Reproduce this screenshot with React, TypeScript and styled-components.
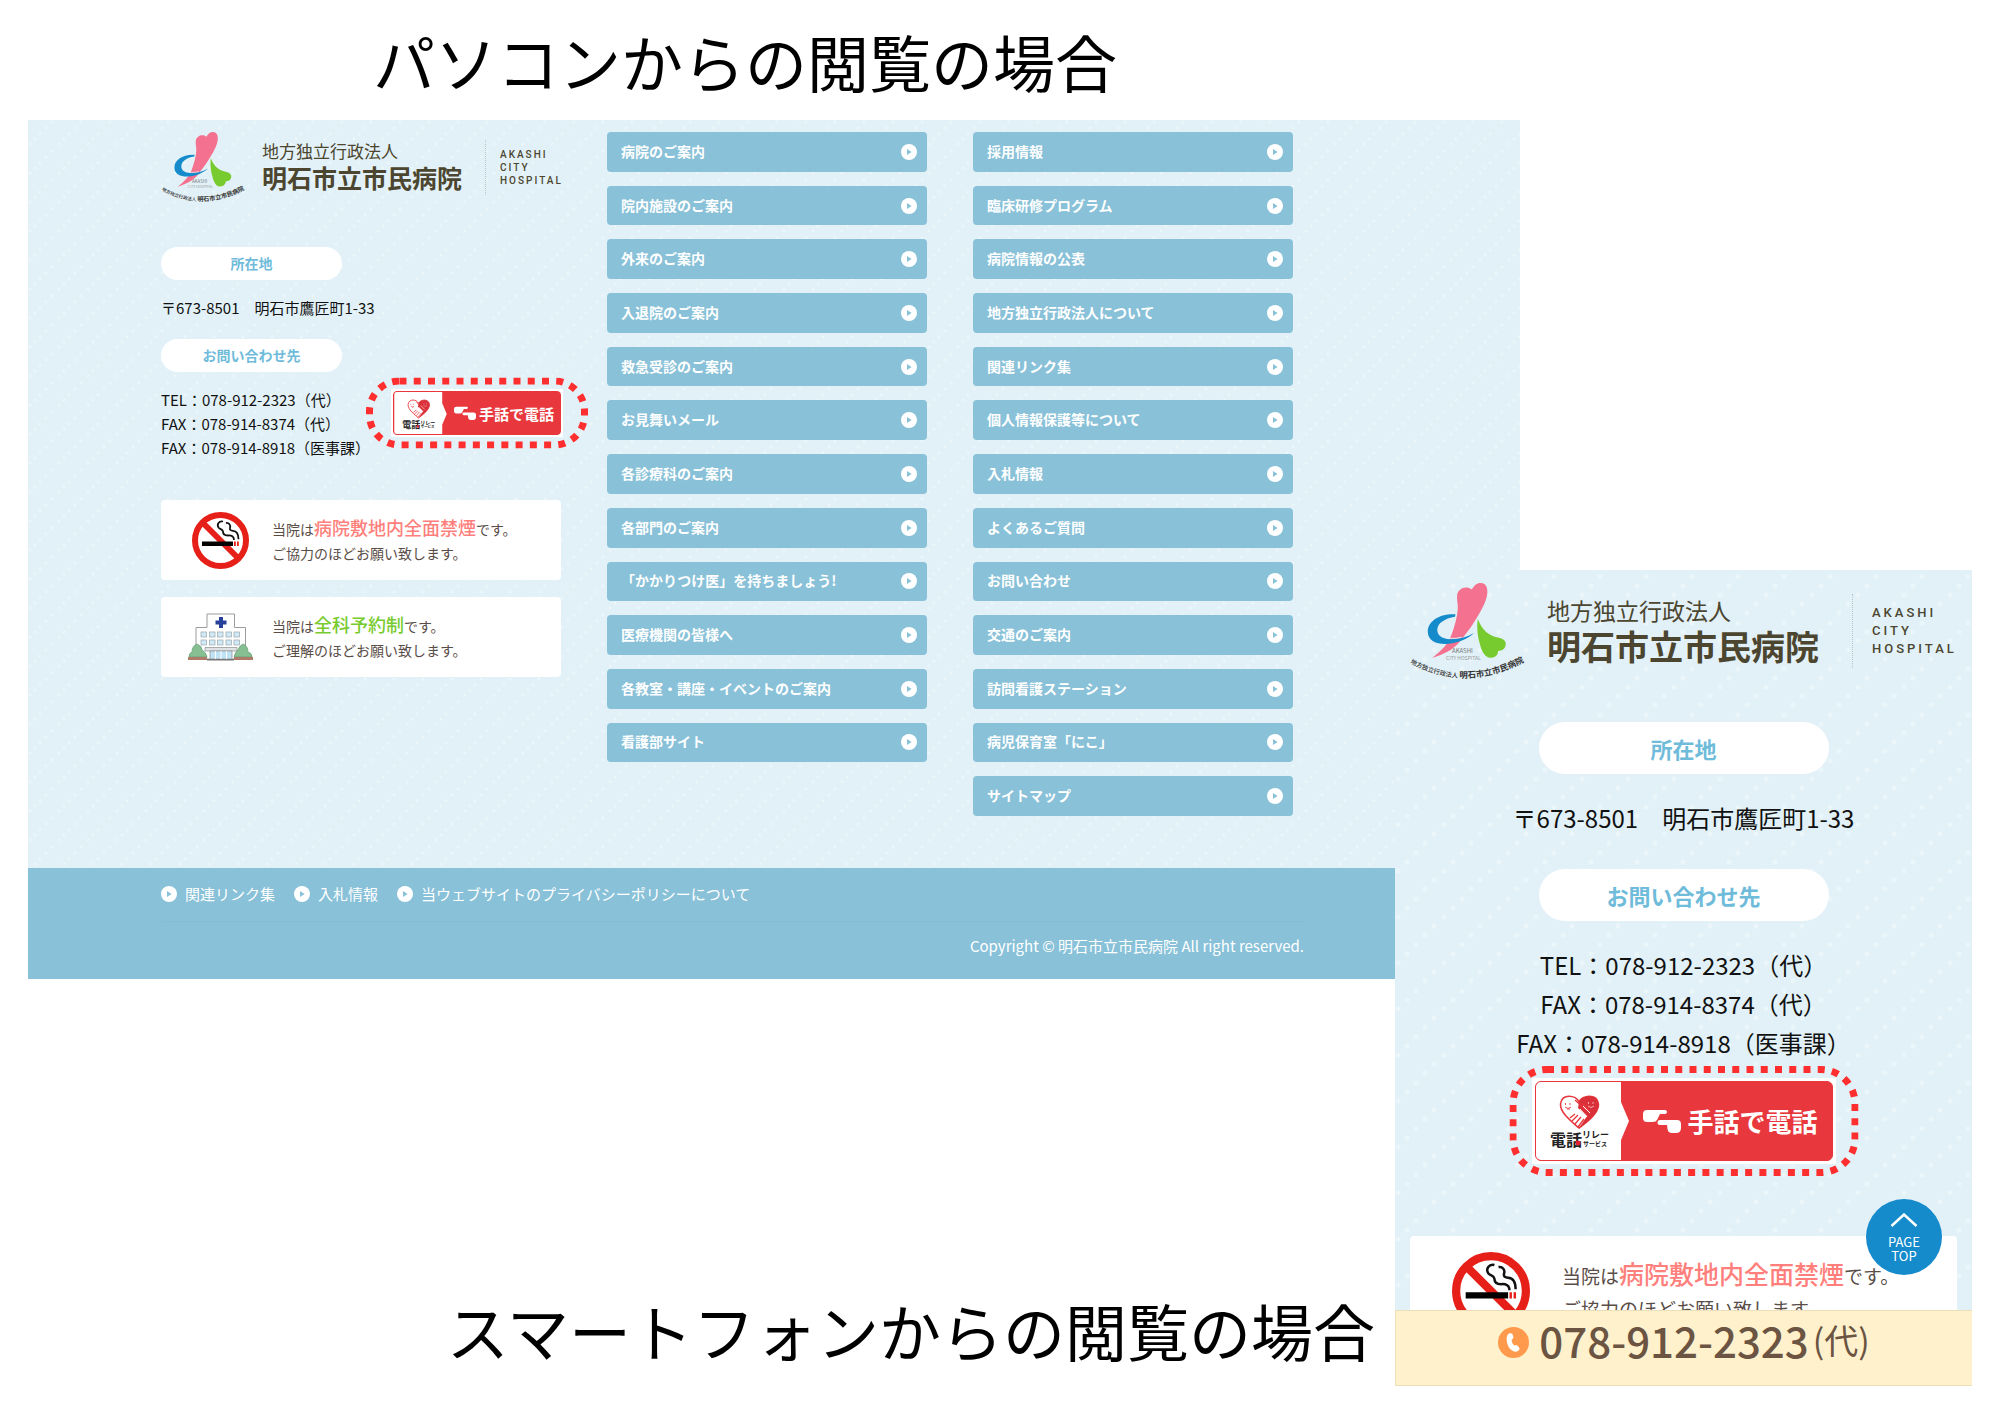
import React from 'react';
import styled, { createGlobalStyle, css } from 'styled-components';

const colors = {
  panel: '#e2f1f7',
  dot: '#eaf6fa',
  bar: '#88c1d8',
  heading: '#6fbbda',
  brown: '#4c4630',
  note: '#594d47',
  alert: '#ff2f2f',
  relay: '#e8383d',
};

const GlobalStyle = createGlobalStyle`
  *, *::before, *::after { box-sizing: border-box; }
  body {
    margin: 0;
    background: #fff;
    color: #111;
    font-family: 'Noto Sans CJK JP', 'Noto Sans', sans-serif;
  }
  h1, h2, h3, p, ul, address { margin: 0; padding: 0; font-weight: inherit; font-style: normal; }
  ul { list-style: none; }
  a { color: inherit; text-decoration: none; }
  svg { display: block; flex: none; }
`;

const smallDots = css`
  background-color: ${colors.panel};
  background-image: radial-gradient(circle at 24px 2px, ${colors.dot} 1px, transparent 2px),
    radial-gradient(circle at 18px 8px, ${colors.dot} 1px, transparent 2px),
    radial-gradient(circle at 12px 14px, ${colors.dot} 1px, transparent 2px),
    radial-gradient(circle at 7px 19px, ${colors.dot} 1px, transparent 2px),
    radial-gradient(circle at 2px 24px, ${colors.dot} 1px, transparent 2px);
  background-size: 29px 29px;
`;

const largeDots = css`
  background-color: ${colors.panel};
  background-image: radial-gradient(circle at 30px 43px, ${colors.dot} 2px, transparent 3px),
    radial-gradient(circle at 21px 7px, ${colors.dot} 2px, transparent 3px),
    radial-gradient(circle at 12px 16px, ${colors.dot} 2px, transparent 3px),
    radial-gradient(circle at 3px 25px, ${colors.dot} 2px, transparent 3px),
    radial-gradient(circle at 39px 34px, ${colors.dot} 2px, transparent 3px);
  background-size: 46px 46px;
`;

/* ---------- board ---------- */

const Board = styled.main`
  display: grid;
  grid-template-columns: 1367fr 125fr 452fr;
  grid-template-rows: 120px 450px 409px 407px;
  padding: 0 28px 28px;
`;

const Caption = styled.h1<{ $lower?: boolean }>`
  grid-column: ${p => (p.$lower ? '1' : '1 / 3')};
  grid-row: ${p => (p.$lower ? 4 : 1)};
  justify-self: ${p => (p.$lower ? 'end' : 'start')};
  align-self: ${p => (p.$lower ? 'end' : 'center')};
  padding: ${p => (p.$lower ? '0 20px 12px 0' : '2px 0 0 345px')};
  color: #000;
  font-size: 62px;
  line-height: 88px;
  white-space: nowrap;
`;

const DesktopPanel = styled.section`
  grid-column: 1 / 3;
  grid-row: 2 / 4;
  display: flex;
  flex-direction: column;
`;

const DesktopBody = styled.div`
  ${smallDots}
  flex: 1;
  display: grid;
  grid-template-columns: 400fr 320fr 320fr;
  column-gap: 46px;
  padding: 12px 227px 52px 133px;
`;

const MobilePanel = styled.section`
  ${largeDots}
  grid-column: 2 / 4;
  grid-row: 3 / 5;
  position: relative;
  display: flex;
  flex-direction: column;
  overflow: hidden;
`;

const MobileBody = styled.div`
  flex: 1;
  min-height: 0;
  overflow: hidden;
  padding: 13px 15px 0;
  display: flex;
  flex-direction: column;
  align-items: center;
`;

/* ---------- brand ---------- */

const Brand = styled.a`
  display: flex;
  align-items: center;
  align-self: stretch;
  color: ${colors.brown};
  white-space: nowrap;
`;

const BrandName = styled.span<{ $large?: boolean }>`
  display: flex;
  flex-direction: column;
  margin-left: ${p => (p.$large ? 23 : 17)}px;
  padding-bottom: 3px;
  font-size: ${p => (p.$large ? 23 : 17)}px;
  line-height: ${p => (p.$large ? 32 : 24)}px;
  strong {
    font-size: ${p => (p.$large ? 34 : 25)}px;
    line-height: ${p => (p.$large ? 40 : 29)}px;
    font-weight: 700;
  }
`;

const BrandLatin = styled.span<{ $large?: boolean }>`
  margin-left: ${p => (p.$large ? 33 : 23)}px;
  padding: ${p => (p.$large ? '10px 0 10px 19px' : '8px 0 8px 14px')};
  border-left: 1px dotted #b9c6c8;
  font-family: Roboto, 'Liberation Sans', sans-serif;
  font-size: ${p => (p.$large ? 13 : 10)}px;
  font-weight: 500;
  line-height: ${p => (p.$large ? 18 : 13)}px;
  letter-spacing: ${p => (p.$large ? 3 : 2)}px;
`;

function LogoMark({ large }: { large?: boolean }) {
  const id = large ? 'arc-large' : 'arc-small';
  return (
    <svg width={large ? 114 : 84} height={large ? 96 : 70} viewBox="0 0 114 96" overflow="visible" aria-hidden="true">
      <path
        d="M61.7 6.6C64 2.500 67 -.2 71 0c5 .2 7 5 6.200 11-.9 8-6.200 17-12.700 27.500C59 47.500 54 53 50 58.500 43 67 34 71 22.200 75 31 68 38 61 41 53c3.600-9.500 6.500-19 6.800-28C48 19.500 46.400 16 47.200 11.500 48.500 5.500 56 2.200 61.700 6.600z"
        fill="#f4728f"
      />
      <path
        d="M45.500 31.300C29 30.500 17.500 38.500 17.800 49c.3 9 9 12.500 19 12 11-.6 20.500-5 27.400-11-8 4.500-16.500 6.500-24 6.200C31.500 55.800 27 52 27.300 46.500 27.700 40 34.500 35.500 45 33.700z"
        fill="#158bcc"
      />
      <path d="M38 55.200q7 .8 13.500-.8" stroke="#e2f1f7" strokeWidth="1" fill="none" />
      <path
        d="M67.700 36c5.300 12.500 11.300 16.500 20.300 18.500 5 1 8 3 7.700 7-.3 4.500-3.500 6-7.700 6.500.2 4-3 6.800-7.500 6.800-4 0-7.500-3.600-9.800-10.800C67.500 54 66.500 45 67.700 36z"
        fill="#78cb2e"
      />
      <text x="42" y="70" fontSize="6" fill="#777">AKASHI</text>
      <text x="36" y="77" fontSize="5" fill="#999">CITY HOSPITAL</text>
      <path id={id} d="M0 80Q56 111 116 78" fill="none" />
      <text fontSize="6.300" fontWeight="500" fill="#333">
        <textPath href={`#${id}`}>
          地方独立行政法人 <tspan fontSize="8.500" fontWeight="700">明石市立市民病院</tspan>
        </textPath>
      </text>
    </svg>
  );
}

function BrandLogo({ large }: { large?: boolean }) {
  return (
    <Brand href="#">
      <LogoMark large={large} />
      <BrandName $large={large}>
        地方独立行政法人
        <strong>明石市立市民病院</strong>
      </BrandName>
      <BrandLatin $large={large}>
        AKASHI
        <br />
        CITY
        <br />
        HOSPITAL
      </BrandLatin>
    </Brand>
  );
}

/* ---------- contact ---------- */

const Info = styled.div`
  display: flex;
  flex-direction: column;
  align-items: flex-start;
  min-width: 0;
`;

const Pill = styled.h2<{ $large?: boolean; $first?: boolean }>`
  width: ${p => (p.$large ? 290 : 181)}px;
  margin-top: ${p => (p.$large ? (p.$first ? 43 : 32) : p.$first ? 45 : 19)}px;
  border-radius: 26px;
  background: #fff;
  color: ${colors.heading};
  font-size: ${p => (p.$large ? 22 : 14)}px;
  font-weight: 700;
  line-height: ${p => (p.$large ? 52 : 33)}px;
  text-align: center;
`;

const Lines = styled.address<{ $large?: boolean }>`
  margin-top: ${p => (p.$large ? 24 : 16)}px;
  font-size: ${p => (p.$large ? 24 : 15)}px;
  line-height: ${p => (p.$large ? 39 : 24)}px;
  text-align: ${p => (p.$large ? 'center' : 'left')};
  white-space: nowrap;
`;

const ContactRow = styled.div`
  display: flex;
  align-self: stretch;
  justify-content: space-between;
  margin-right: -2px;
`;

const RelaySlot = styled.div<{ $large?: boolean }>`
  position: relative;
  align-self: ${p => (p.$large ? 'center' : 'flex-start')};
  margin-top: ${p => (p.$large ? 16 : 17)}px;
`;

const Callout = styled.svg`
  position: absolute;
  top: 50%;
  left: 50%;
  transform: translate(-50%, -50%);
  pointer-events: none;
`;

const RelayLink = styled.a<{ $large?: boolean }>`
  display: flex;
  width: ${p => (p.$large ? 304 : 172)}px;
  height: ${p => (p.$large ? 86 : 48)}px;
  padding: ${p => (p.$large ? 3 : 2)}px;
  background: #fff;
`;

const RelayFace = styled.span<{ $large?: boolean }>`
  flex: 1;
  display: flex;
  overflow: hidden;
  border: 1px solid ${colors.relay};
  border-radius: ${p => (p.$large ? 6 : 4)}px;
  background: ${colors.relay};
  color: #fff;
  font-size: ${p => (p.$large ? 26 : 15)}px;
  font-weight: 700;
  line-height: 1;
  white-space: nowrap;
`;

const RelayLabel = styled.span<{ $large?: boolean }>`
  flex: 1;
  display: flex;
  align-items: center;
  gap: ${p => (p.$large ? 7 : 3)}px;
  padding-left: ${p => (p.$large ? 14 : 7)}px;
`;

function Relay({ large }: { large?: boolean }) {
  const w = large ? 349 : 222;
  const h = large ? 110 : 71;
  return (
    <RelaySlot $large={large}>
      <RelayLink href="#" $large={large}>
        <RelayFace $large={large}>
          <svg width={large ? 93 : 53} height={large ? 78 : 44} viewBox="0 0 93 78" aria-hidden="true">
            <path d="M0 0H85V20L93 39 85 58V78H0z" fill="#fff" />
            <path
              d="M43 20C40 13 26 11 24.500 22 24 31 36 40 43 46 51 40 63 31 62.500 22 61 11 46 13 43 20z"
              fill="#fff"
              stroke={colors.relay}
              strokeWidth="1.600"
            />
            <path d="M43 20C46 13 61 11 62.500 22 63 31 51 40 43 46l8-12-9-8z" fill="#d9303a" />
            <path d="M39 18l11 10M47 22l6 6M34 36l5-4M36 39l6-6M39 42l6-7M42 45l6-8" stroke={colors.relay} strokeWidth="1.300" />
            <path d="M44 27l7 8M47 24l7 7" stroke="#fff" strokeWidth="1" />
            <path d="M29.500 21v2M34 21v2M29 25q3 3 6 0M31 27h3" stroke={colors.relay} strokeWidth=".9" fill="none" />
            <path d="M52.500 20v2M57 20v2M52 24q3 3 6 0" stroke="#f8b8bc" strokeWidth=".9" fill="none" />
            <text x="14" y="64" fontSize="16" fontWeight="700" fill="#222">電話</text>
            <text x="46" y="56" fontSize="9" fontWeight="700" fill="#222">リレー</text>
            <text x="47" y="64" fontSize="6" fontWeight="700" fill="#222">サービス</text>
            <circle cx="42" cy="61" r="2.500" fill="#e0222c" />
          </svg>
          <RelayLabel $large={large}>
            <svg width={large ? 38 : 22} height={large ? 24 : 14} viewBox="0 0 38 24" fill="#fff" aria-hidden="true">
              <path d="M4 1H22a2 2 0 0 1 0 4H17L14 11Q13 13 10 13H4Q0 13 0 9V5Q0 1 4 1z" />
              <path d="M17 11H34Q38 11 38 15V19Q38 24 33 24H29Q25 24 24.500 20L24 16H17a2.500 2.500 0 0 1 0-5z" />
            </svg>
            手話で電話
          </RelayLabel>
        </RelayFace>
      </RelayLink>
      <Callout width={w} height={h} aria-hidden="true">
        <rect
          x="3.500"
          y="3.500"
          width={w - 7}
          height={h - 7}
          rx={large ? 34 : 30}
          fill="none"
          stroke={colors.alert}
          strokeWidth="7"
          strokeDasharray="7 7.250"
        />
      </Callout>
    </RelaySlot>
  );
}

/* ---------- notices ---------- */

const Notice = styled.div<{ $large?: boolean; $gap: number }>`
  display: flex;
  align-items: center;
  align-self: stretch;
  flex: none;
  height: ${p => (p.$large ? 110 : 80)}px;
  margin-top: ${p => p.$gap}px;
  padding-left: ${p => (p.$large ? 42 : 26)}px;
  gap: ${p => (p.$large ? 32 : 18)}px;
  border-radius: 4px;
  background: #fff;
  color: ${colors.note};
  font-size: ${p => (p.$large ? 19 : 14)}px;
  line-height: ${p => (p.$large ? 33 : 24)}px;
  white-space: nowrap;
`;

const NoticeIcon = styled.span<{ $large?: boolean }>`
  flex: none;
  display: flex;
  justify-content: center;
  width: ${p => (p.$large ? 78 : 67)}px;
`;

const Accent = styled.em<{ $large?: boolean; $green?: boolean }>`
  color: ${p => (p.$green ? '#78cb2e' : '#ff7f7c')};
  font-size: ${p => (p.$large ? 25 : 18)}px;
  font-style: normal;
  font-weight: 500;
`;

function NoSmokingIcon({ size }: { size: number }) {
  return (
    <svg width={size} height={size} viewBox="0 0 57 57" fill="none" aria-hidden="true">
      <circle cx="28.500" cy="28.500" r="25.500" fill="#fff" stroke="#e71f19" strokeWidth="6" />
      <path d="M11 11L46 46" stroke="#e71f19" strokeWidth="6" />
      <path d="M10 29.500H41V34H10z" fill="#000" />
      <path d="M42 29.500h1.800V34H42zM45 29.500h1.800V34H45z" fill="#e71f19" />
      <path
        d="M31 9.500c-4-1-6.500 3-4.500 6 1.500 2 4 1.500 4.500 4 0 3 2 4 5 4 3.500-.3 6 1 6 4.500M34 11c3-.5 5 2 4 5-.5 2 1 2.700 3 2.800 4 .2 5.500 3 5.500 8.500"
        stroke="#111"
        strokeWidth="1.800"
      />
    </svg>
  );
}

function HospitalIcon() {
  return (
    <svg width="65" height="48" viewBox="0 0 65 48" fill="none" aria-hidden="true">
      <path d="M8 46V14.500H19V1H46.500V14.500H57.500V46z" fill="#fff" stroke="#9c9c9c" />
      <path d="M31 4h4v3.500h3.500v4H35V15h-4v-3.500h-3.500v-4H31z" fill="#27409a" />
      <g fill="#cfe9f7" stroke="#9aa5ab" strokeWidth=".7">
        {[13, 21.5, 29.5, 38, 46].map(x => (
          <React.Fragment key={x}>
            <rect x={x} y="19" width="5.500" height="5" />
            <rect x={x} y="27" width="5.500" height="5" />
          </React.Fragment>
        ))}
      </g>
      <path d="M17 34.500H49V38H17z" fill="#dfe3e5" stroke="#8c8c8c" strokeWidth=".7" />
      <path d="M22 38H44V46H22z" fill="#bfe2f5" stroke="#8c8c8c" strokeWidth=".7" />
      <path d="M27.500 38v8M33 38v8M38.500 38v8" stroke="#fff" />
      <path
        d="M1 44q0-4 3-5 0-6 5-8 5 2 5 6 4 2 5 7zM46 44q1-5 4-7 1-4 5-6 5 2 5 8 4 1 4 5z"
        fill="#86bf92"
        stroke="#5f9c72"
        strokeWidth=".7"
      />
      <path d="M0 44H19V47H0zM46 44H65V47H46z" fill="#b07a68" />
      <path d="M19 46H46V47.500H19z" fill="#777" />
    </svg>
  );
}

function SmokingNotice({ large }: { large?: boolean }) {
  return (
    <Notice $large={large} $gap={large ? 72 : 40}>
      <NoticeIcon $large={large}>
        <NoSmokingIcon size={large ? 78 : 57} />
      </NoticeIcon>
      <p>
        当院は<Accent $large={large}>病院敷地内全面禁煙</Accent>です。
        <br />
        ご協力のほどお願い致します。
      </p>
    </Notice>
  );
}

/* ---------- navigation ---------- */

const NavList = styled.ul`
  display: grid;
  grid-template-rows: repeat(13, 1fr);
  row-gap: 14px;
`;

const NavLink = styled.a`
  display: flex;
  align-items: center;
  justify-content: space-between;
  height: 100%;
  padding: 0 10px 0 14px;
  border-radius: 4px;
  background: ${colors.bar};
  color: #fff;
  font-size: 14px;
  font-weight: 700;
  line-height: 20px;
  white-space: nowrap;
  span { padding-bottom: 2px; }
`;

function PlayDot() {
  return (
    <svg width="16" height="16" viewBox="0 0 16 16" aria-hidden="true">
      <circle cx="8" cy="8" r="8" fill="#fff" />
      <path d="M6 5L10.600 8 6 11z" fill={colors.bar} />
    </svg>
  );
}

const guideLinks = [
  '病院のご案内',
  '院内施設のご案内',
  '外来のご案内',
  '入退院のご案内',
  '救急受診のご案内',
  'お見舞いメール',
  '各診療科のご案内',
  '各部門のご案内',
  '「かかりつけ医」を持ちましょう!',
  '医療機関の皆様へ',
  '各教室・講座・イベントのご案内',
  '看護部サイト',
];

const aboutLinks = [
  '採用情報',
  '臨床研修プログラム',
  '病院情報の公表',
  '地方独立行政法人について',
  '関連リンク集',
  '個人情報保護等について',
  '入札情報',
  'よくあるご質問',
  'お問い合わせ',
  '交通のご案内',
  '訪問看護ステーション',
  '病児保育室「にこ」',
  'サイトマップ',
];

const footerLinks = ['関連リンク集', '入札情報', '当ウェブサイトのプライバシーポリシーについて'];

function Nav({ items }: { items: string[] }) {
  return (
    <NavList>
      {items.map(label => (
        <li key={label}>
          <NavLink href="#">
            <span>{label}</span>
            <PlayDot />
          </NavLink>
        </li>
      ))}
    </NavList>
  );
}

/* ---------- footer ---------- */

const Footer = styled.footer`
  height: 111px;
  padding: 0 216px 0 133px;
  background: ${colors.bar};
  color: #fff;
  font-size: 15px;
`;

const FooterLinks = styled.ul`
  display: flex;
  gap: 19px;
  padding: 14px 0 15px;
  border-bottom: 1px solid #84bed6;
  line-height: 24px;
  a {
    display: flex;
    align-items: center;
    gap: 8px;
  }
`;

const Copyright = styled.p`
  padding-top: 12px;
  line-height: 24px;
  text-align: right;
`;

/* ---------- phone extras ---------- */

const PhoneBar = styled.a`
  flex: none;
  display: flex;
  align-items: flex-start;
  justify-content: center;
  height: 76px;
  padding-top: 5px;
  border: 1px solid #ecdfb8;
  border-right: 0;
  background: #fff1cc;
  color: #6b5442;
  font-size: 42px;
  font-weight: 500;
  line-height: 48px;
  white-space: nowrap;
  svg { margin: 11px 10px 0 0; }
  small { margin-left: 4px; font-size: 34px; font-weight: 400; }
`;

const PageTop = styled.button`
  position: absolute;
  right: 30px;
  bottom: 111px;
  display: flex;
  flex-direction: column;
  align-items: center;
  width: 76px;
  height: 76px;
  padding: 14px 0 0;
  border: 0;
  border-radius: 50%;
  background: #158bcc;
  color: #fff;
  font-family: inherit;
  font-size: 13px;
  line-height: 14px;
  svg { margin-bottom: 8px; }
`;

export default function App() {
  return (
    <>
      <GlobalStyle />
      <Board>
        <Caption>パソコンからの閲覧の場合</Caption>

        <DesktopPanel>
          <DesktopBody>
            <Info>
              <BrandLogo />
              <Pill $first>所在地</Pill>
              <Lines>〒673-8501　明石市鷹匠町1-33</Lines>
              <Pill>お問い合わせ先</Pill>
              <ContactRow>
                <Lines>
                  TEL：078-912-2323（代）
                  <br />
                  FAX：078-914-8374（代）
                  <br />
                  FAX：078-914-8918（医事課）
                </Lines>
                <Relay />
              </ContactRow>
              <SmokingNotice />
              <Notice $gap={17}>
                <NoticeIcon>
                  <HospitalIcon />
                </NoticeIcon>
                <p>
                  当院は<Accent $green>全科予約制</Accent>です。
                  <br />
                  ご理解のほどお願い致します。
                </p>
              </Notice>
            </Info>
            <Nav items={guideLinks} />
            <Nav items={aboutLinks} />
          </DesktopBody>
          <Footer>
            <FooterLinks>
              {footerLinks.map(label => (
                <li key={label}>
                  <a href="#">
                    <PlayDot />
                    {label}
                  </a>
                </li>
              ))}
            </FooterLinks>
            <Copyright>Copyright © 明石市立市民病院 All right reserved.</Copyright>
          </Footer>
        </DesktopPanel>

        <MobilePanel>
          <MobileBody>
            <BrandLogo large />
            <Pill $large $first>所在地</Pill>
            <Lines $large>〒673-8501　明石市鷹匠町1-33</Lines>
            <Pill $large>お問い合わせ先</Pill>
            <Lines $large>
              TEL：078-912-2323（代）
              <br />
              FAX：078-914-8374（代）
              <br />
              FAX：078-914-8918（医事課）
            </Lines>
            <Relay large />
            <SmokingNotice large />
          </MobileBody>
          <PhoneBar href="tel:078-912-2323">
            <svg width="31" height="31" viewBox="0 0 31 31" aria-hidden="true">
              <circle cx="15.500" cy="15.500" r="15.500" fill="#ff9a4d" />
              <path
                d="M11 6.500c1.500-.7 3.200-.3 3.700 1.200l.6 2.300c.3 1.200-.3 1.800-1.500 2.500-.6 2 .8 4.800 2.700 6 1.200-.7 2-.8 2.800 0l1.600 1.700c1 1.100.7 2.700-.6 3.600-2.600 1.800-6 .7-8.500-2.300C8.500 17.500 7.200 8.500 11 6.500z"
                fill="#fff"
              />
            </svg>
            078-912-2323<small>(代)</small>
          </PhoneBar>
          <PageTop type="button">
            <svg width="28" height="14" viewBox="0 0 28 14" fill="none" aria-hidden="true">
              <path d="M1.500 13L14 1.500 26.500 13" stroke="#fff" strokeWidth="2.500" />
            </svg>
            <span>PAGE</span>
            <span>TOP</span>
          </PageTop>
        </MobilePanel>

        <Caption as="h2" $lower>スマートフォンからの閲覧の場合</Caption>
      </Board>
    </>
  );
}
